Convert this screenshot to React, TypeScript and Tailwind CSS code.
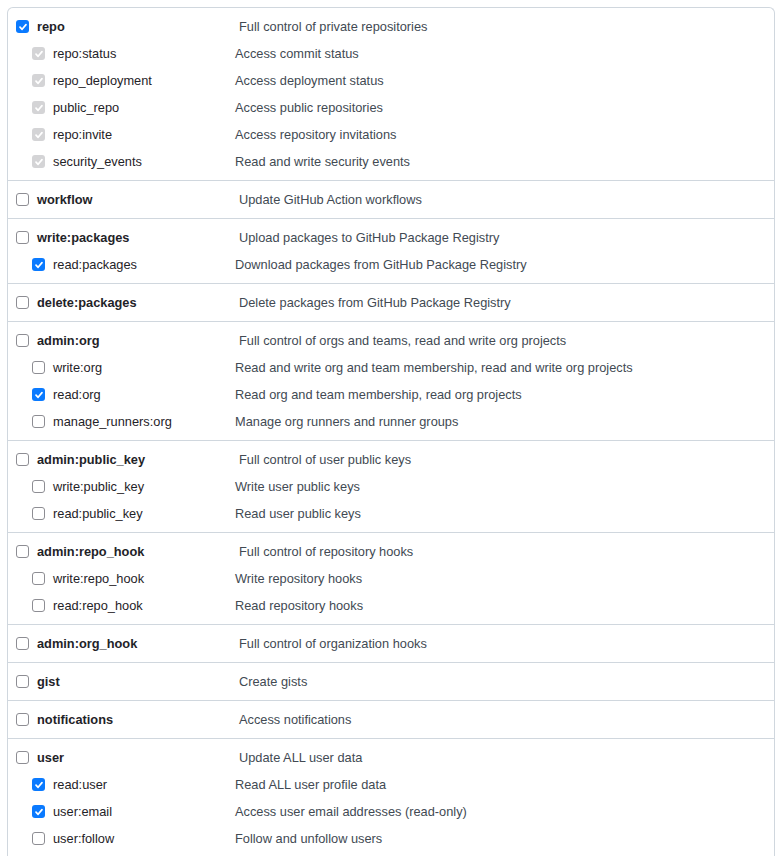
import React from "react";

type State = "checked" | "unchecked" | "disabled";
type Sub = { name: string; desc: string; state: State };
type Group = { name: string; desc: string; state: State; subs?: Sub[] };

const groups: Group[] = [
  {
    name: "repo",
    desc: "Full control of private repositories",
    state: "checked",
    subs: [
      { name: "repo:status", desc: "Access commit status", state: "disabled" },
      { name: "repo_deployment", desc: "Access deployment status", state: "disabled" },
      { name: "public_repo", desc: "Access public repositories", state: "disabled" },
      { name: "repo:invite", desc: "Access repository invitations", state: "disabled" },
      { name: "security_events", desc: "Read and write security events", state: "disabled" },
    ],
  },
  { name: "workflow", desc: "Update GitHub Action workflows", state: "unchecked" },
  {
    name: "write:packages",
    desc: "Upload packages to GitHub Package Registry",
    state: "unchecked",
    subs: [{ name: "read:packages", desc: "Download packages from GitHub Package Registry", state: "checked" }],
  },
  { name: "delete:packages", desc: "Delete packages from GitHub Package Registry", state: "unchecked" },
  {
    name: "admin:org",
    desc: "Full control of orgs and teams, read and write org projects",
    state: "unchecked",
    subs: [
      { name: "write:org", desc: "Read and write org and team membership, read and write org projects", state: "unchecked" },
      { name: "read:org", desc: "Read org and team membership, read org projects", state: "checked" },
      { name: "manage_runners:org", desc: "Manage org runners and runner groups", state: "unchecked" },
    ],
  },
  {
    name: "admin:public_key",
    desc: "Full control of user public keys",
    state: "unchecked",
    subs: [
      { name: "write:public_key", desc: "Write user public keys", state: "unchecked" },
      { name: "read:public_key", desc: "Read user public keys", state: "unchecked" },
    ],
  },
  {
    name: "admin:repo_hook",
    desc: "Full control of repository hooks",
    state: "unchecked",
    subs: [
      { name: "write:repo_hook", desc: "Write repository hooks", state: "unchecked" },
      { name: "read:repo_hook", desc: "Read repository hooks", state: "unchecked" },
    ],
  },
  { name: "admin:org_hook", desc: "Full control of organization hooks", state: "unchecked" },
  { name: "gist", desc: "Create gists", state: "unchecked" },
  { name: "notifications", desc: "Access notifications", state: "unchecked" },
  {
    name: "user",
    desc: "Update ALL user data",
    state: "unchecked",
    subs: [
      { name: "read:user", desc: "Read ALL user profile data", state: "checked" },
      { name: "user:email", desc: "Access user email addresses (read-only)", state: "checked" },
      { name: "user:follow", desc: "Follow and unfollow users", state: "unchecked" },
    ],
  },
];

function Check({ state }: { state: State }) {
  if (state === "unchecked") {
    return <span className="block w-[13px] h-[13px] shrink-0 rounded-[3px] border-[1.5px] border-[#8d8d93] bg-white" />;
  }
  const bg = state === "checked" ? "bg-[#0a7aff]" : "bg-[#d4d4d6]";
  return (
    <span className={`flex items-center justify-center w-[13px] h-[13px] shrink-0 rounded-[3px] ${bg}`}>
      <svg width="10" height="10" viewBox="0 0 10 10" fill="none">
        <path d="M2 5.2 L4.1 7.3 L8 2.6" stroke="white" strokeWidth="1.7" strokeLinecap="round" strokeLinejoin="round" />
      </svg>
    </span>
  );
}

export default function App() {
  return (
    <div className="bg-white p-[7px] pb-0 min-h-[856px]" style={{ fontFamily: '"Liberation Sans", Arial, sans-serif' }}>
      <div className="border border-b-0 border-[#d0d7de] rounded-t-md divide-y divide-[#d0d7de] text-[12.8px] text-[#1f2328]">
        {groups.map((g) => (
          <div key={g.name} className="py-[5px]">
            <div className="flex items-center h-[27px] pl-2">
              <div className="flex items-center gap-2 w-[223px]">
                <Check state={g.state} />
                <span className="font-bold">{g.name}</span>
              </div>
              <span className="text-[#424a53]">{g.desc}</span>
            </div>
            {g.subs?.map((s) => (
              <div key={s.name} className="flex items-center h-[27px] pl-6">
                <div className="flex items-center gap-2 w-[203px]">
                  <Check state={s.state} />
                  <span>{s.name}</span>
                </div>
                <span className="text-[#424a53]">{s.desc}</span>
              </div>
            ))}
          </div>
        ))}
      </div>
    </div>
  );
}
